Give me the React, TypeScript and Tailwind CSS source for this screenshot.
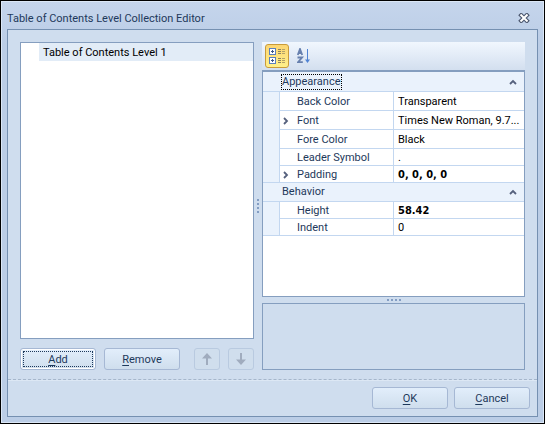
import { useState } from "react";
import clsx from "clsx";

interface Property {
  name: string;
  value: string;
  bold?: boolean;
  expandable?: boolean;
  tall?: boolean;
}

interface Category {
  name: string;
  items: Property[];
}

const categories: Category[] = [
  {
    name: "Appearance",
    items: [
      { name: "Back Color", value: "Transparent", tall: true },
      { name: "Font", value: "Times New Roman, 9.7...", expandable: true, tall: true },
      { name: "Fore Color", value: "Black", tall: true },
      { name: "Leader Symbol", value: "." },
      { name: "Padding", value: "0, 0, 0, 0", bold: true, expandable: true },
    ],
  },
  {
    name: "Behavior",
    items: [
      { name: "Height", value: "58.42", bold: true },
      { name: "Indent", value: "0" },
    ],
  },
];

function CloseIcon() {
  return (
    <svg width="12" height="10" viewBox="0 0 12 10" aria-hidden="true">
      <path d="M3.2 2.2L8.8 7.8M8.8 2.2L3.2 7.8" stroke="#4a566e" strokeWidth="4.2" strokeLinecap="square" />
      <path d="M3.2 2.2L8.8 7.8M8.8 2.2L3.2 7.8" stroke="#fff" strokeWidth="2" strokeLinecap="square" />
    </svg>
  );
}

function CategorizedIcon() {
  return (
    <svg width="16" height="16" viewBox="0 0 16 16" fill="none" shapeRendering="crispEdges" aria-hidden="true">
      {[0, 9].map((y) => (
        <g key={y} transform={`translate(0 ${y})`}>
          <rect x="0.5" y="0.5" width="6" height="6" fill="#fff" stroke="#5b7fbd" />
          <path d="M2 3.5h3M3.5 2v3" stroke="#3c5688" />
          <path d="M9 1.5h3M9 3.5h3M9 5.5h3" stroke="#8a8163" />
          <path d="M13 1.5h3M13 3.5h3M13 5.5h3" stroke="#b3a268" />
        </g>
      ))}
    </svg>
  );
}

function SortIcon() {
  return (
    <svg width="14" height="16" viewBox="0 0 14 16" fill="none" aria-hidden="true">
      <path d="M0.8 7L3 1L5.2 7M1.5 5h3" stroke="#6780ae" strokeWidth="1.8" />
      <path d="M0.5 9.5h4.6L1 14.2h4.8" stroke="#6780ae" strokeWidth="1.8" />
      <path d="M10.5 1v12" stroke="#4f83d4" shapeRendering="crispEdges" />
      <path d="M8 11.5h5L10.5 15z" fill="#4f83d4" />
    </svg>
  );
}

function ArrowIcon({ down }: { down?: boolean }) {
  return (
    <svg width="12" height="12" viewBox="0 0 12 12" className={down ? "rotate-180" : ""} aria-hidden="true">
      <path d="M6 0L11 5.5H7V12H5V5.5H1z" fill="#a0acbe" />
    </svg>
  );
}

function Chevron({ className }: { className?: string }) {
  return (
    <svg width="8" height="8" viewBox="0 0 8 8" fill="none" className={className} aria-hidden="true">
      <path d="M2 1L5 4L2 7" stroke="#56617d" strokeWidth="1.8" />
    </svg>
  );
}

function Grip({ vertical }: { vertical?: boolean }) {
  return (
    <div className={clsx("flex items-center justify-center gap-[2px]", vertical ? "flex-col" : "h-[6px]")}>
      {[0, 1, 2, 3].map((i) => (
        <span key={i} className="size-[2px] bg-[#839dc3]" />
      ))}
    </div>
  );
}

function DialogButton({ label, focused }: { label: string; focused?: boolean }) {
  return (
    <button
      type="button"
      className={clsx(
        "flex h-[22px] w-[76px] rounded-[3px] border border-[#a6b8d4] bg-linear-to-b from-[#e2eefb] to-[#cfdeed] p-[2px] text-[#1e395b]",
        focused && "shadow-[inset_0_0_0_1px_#fff]"
      )}
    >
      <span
        className={clsx(
          "flex h-full w-full items-center justify-center border border-dotted",
          focused ? "border-[#1e395b]" : "border-transparent"
        )}
      >
        <span className="pt-[2px]">
          <u className="underline-offset-2">{label[0]}</u>
          {label.slice(1)}
        </span>
      </span>
    </button>
  );
}

function MoveButton({ down }: { down?: boolean }) {
  return (
    <button
      type="button"
      disabled
      aria-label={down ? "Move down" : "Move up"}
      className="flex h-[22px] w-[26px] items-center justify-center rounded-[3px] border border-[#b9cae0] bg-[#d0deed]"
    >
      <ArrowIcon down={down} />
    </button>
  );
}

function PropertyTable() {
  const [collapsed, setCollapsed] = useState<string[]>([]);

  function toggle(name: string) {
    setCollapsed((prev) =>
      prev.includes(name) ? prev.filter((n) => n !== name) : [...prev, name]
    );
  }

  return (
    <table className="w-full table-fixed border-separate border-spacing-0 leading-[14px]">
      <colgroup>
        <col className="w-[17px]" />
        <col className="w-[114px]" />
        <col />
      </colgroup>
      {categories.map((cat, c) => (
        <tbody key={cat.name}>
          <tr>
            <th colSpan={3} className="border-b border-[#c3d7f0] bg-[#eaf2fc] p-0 font-normal">
              <button
                type="button"
                onClick={() => toggle(cat.name)}
                className={clsx(
                  "flex w-full items-center justify-between pr-[7px] pl-[18px] text-[#1e395b]",
                  c === 0 ? "h-[19px]" : "h-[18px]"
                )}
              >
                <span className={clsx("border border-dotted", c === 0 ? "border-black" : "border-transparent")}>
                  {cat.name}
                </span>
                <Chevron className={collapsed.includes(cat.name) ? "rotate-90" : "-rotate-90"} />
              </button>
            </th>
          </tr>
          {!collapsed.includes(cat.name) &&
            cat.items.map((p, i) => (
              <tr key={p.name} className={p.tall ? "h-[19px]" : "h-[17px]"}>
                <td
                  className={clsx(
                    "border-r border-r-[#c3d7f0] bg-[#eaf2fc] p-0",
                    i === cat.items.length - 1 && "border-b border-b-[#c3d7f0]"
                  )}
                />
                <th className="border-r border-b border-[#c3d7f0] px-0 pt-[2px] pb-0 text-left font-normal text-[#1e395b]">
                  <div className="flex items-center">
                    <span className="flex w-[17px] pl-[2px]">{p.expandable && <Chevron />}</span>
                    {p.name}
                  </div>
                </th>
                <td
                  className={clsx(
                    "border-b border-[#c3d7f0] pt-[2px] pr-0 pb-0 pl-1 whitespace-nowrap text-black",
                    p.bold && "font-['DejaVu_Sans_Condensed','DejaVu_Sans',sans-serif] font-bold"
                  )}
                >
                  {p.value}
                </td>
              </tr>
            ))}
        </tbody>
      ))}
    </table>
  );
}

export default function App() {
  return (
    <div className="flex min-h-screen flex-col border border-black font-[Roboto,'DejaVu_Sans',sans-serif] text-[11px] leading-4">
      <div className="flex flex-1 flex-col border border-[#dbe7f6] bg-linear-to-b from-[#c5d5ec] to-[#bbcde6] to-10% px-[5px] pb-[5px]">
        <header className="flex h-[27px] items-center justify-between pr-2 text-[#1e395b]">
          <h1 className="pt-[6px]">Table of Contents Level Collection Editor</h1>
          <button type="button" aria-label="Close" className="pt-1">
            <CloseIcon />
          </button>
        </header>

        <main className="flex flex-1 flex-col border border-[#7590b1] bg-[#cfddee]">
          <div className="grid flex-1 grid-cols-[234fr_8px_263fr] px-3 pt-3 pb-[9px]">
            <section className="flex min-w-0 flex-col gap-[9px]">
              <ul className="flex-1 border border-[#859ebf] bg-white pl-[18px]">
                <li>
                  <button type="button" className="block h-[18px] w-full bg-[#e2ecf7] pt-[2px] pl-1 text-left text-black">
                    Table of Contents Level 1
                  </button>
                </li>
              </ul>
              <div className="flex items-center justify-between">
                <div className="flex gap-2">
                  <DialogButton label="Add" focused />
                  <DialogButton label="Remove" />
                </div>
                <div className="flex gap-2">
                  <MoveButton />
                  <MoveButton down />
                </div>
              </div>
            </section>

            <Grip vertical />

            <section className="flex min-w-0 flex-col">
              <div className="flex h-7 items-center gap-2 bg-linear-to-b from-[#f1f7fe] to-[#d3dfef] px-[3px]">
                <button
                  type="button"
                  aria-label="Categorized"
                  className="flex size-6 items-center justify-center rounded-[3px] border border-[#c99b3a] bg-linear-to-b from-[#fcd673] to-[#fff08a]"
                >
                  <CategorizedIcon />
                </button>
                <button type="button" aria-label="Alphabetical">
                  <SortIcon />
                </button>
              </div>
              <div className="flex-1 border border-t-2 border-[#859ebf] bg-white">
                <PropertyTable />
              </div>
              <Grip />
              <div className="h-[67px] border border-[#859ebf]" />
            </section>
          </div>

          <div className="border-t border-dashed border-[#a5b6cb]" />
          <footer className="flex justify-end gap-[6px] border-t border-[#dce7f4] pt-[6px] pr-[7px] pb-[7px]">
            <DialogButton label="OK" />
            <DialogButton label="Cancel" />
          </footer>
        </main>
      </div>
    </div>
  );
}
